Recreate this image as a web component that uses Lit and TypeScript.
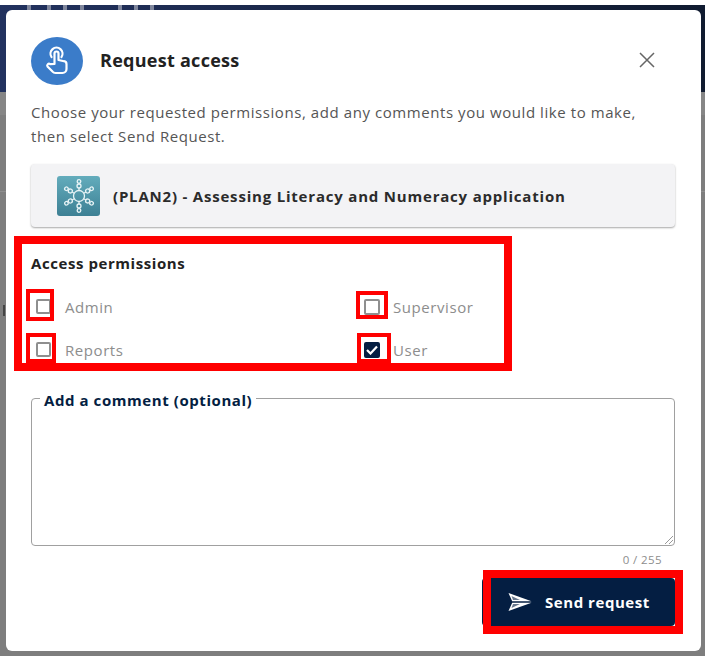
import { LitElement, html, svg, css } from 'lit'
import { customElement } from 'lit/decorators.js'

const PERMISSIONS = [
    { name: 'Admin', checked: false },
    { name: 'Supervisor', checked: false },
    { name: 'Reports', checked: false },
    { name: 'User', checked: true }
]

// red annotation boxes drawn over the screenshot: left, top, width, height, border
const MARKS = [
    [14, 236, 498, 135, 8],
    [26, 289, 28, 32, 4],
    [26, 333, 30, 30, 4],
    [356, 291, 32, 28, 4],
    [357, 333, 34, 30, 4],
    [483, 570, 200, 64, 8]
]

// faint pieces of the page heading that show above the dialog
const TICKS = [27, 47, 63, 80, 118, 134, 150]

@customElement('app-root')
export class AppRoot extends LitElement {
    static styles = css`
        :host {
            display: block;
            width: 705px;
            height: 656px;
            overflow: hidden;
            position: relative;
            background: #fff;
            font-family: 'Open Sans', 'Noto Sans', sans-serif;
            letter-spacing: 0.57px;
        }

        .backdrop {
            position: absolute;
            inset: 5px 0 0 0;
            background: #7e7e7e;
        }

        .banner {
            height: 87px;
            background: linear-gradient(90deg, #22325f, #1a2748 45%, #101b30);
        }

        .band {
            height: 23px;
            background: #868686;
        }

        .rule {
            height: 1px;
            margin-top: 76px;
            background: #8e8e8e;
        }

        .tick {
            position: absolute;
            top: 5px;
            width: 4px;
            height: 5px;
            background: #7f869c;
        }

        .glyph {
            position: absolute;
            left: 3px;
            top: 305px;
            width: 2px;
            height: 11px;
            background: #444;
        }

        .dialog {
            position: absolute;
            left: 6px;
            top: 10px;
            width: 695px;
            height: 641px;
            box-sizing: border-box;
            background: #fff;
            border-radius: 6px;
            padding: 27px 26px 0 25px;
        }

        .head {
            display: flex;
            align-items: center;
            height: 48px;
        }

        .avatar {
            width: 52px;
            height: 48px;
            border-radius: 50%;
            background: #3b7cc9;
            display: flex;
            align-items: center;
            justify-content: center;
        }

        .title {
            margin: 0 0 3px 17px;
            font-size: 18px;
            font-weight: 700;
            letter-spacing: 0.27px;
            color: #222;
            flex: 1;
        }

        .close {
            width: 16px;
            height: 16px;
            margin: 0 20px 3px 0;
        }

        .intro {
            margin: 15px 0 0;
            font-size: 15px;
            line-height: 24px;
            color: #555;
            width: 625px;
        }

        .app {
            margin-top: 16px;
            height: 63px;
            box-sizing: border-box;
            display: flex;
            align-items: center;
            gap: 13px;
            padding-left: 26px;
            background: #f3f3f5;
            border-radius: 4px;
            box-shadow: 0 1px 2px rgba(0, 0, 0, 0.35);
            font-size: 15px;
            font-weight: 700;
            letter-spacing: 0.8px;
            color: #2b2b2b;
        }

        .app-icon {
            width: 43px;
            height: 40px;
            border-radius: 3px;
            background: linear-gradient(180deg, #63acbc, #3d8094);
            display: flex;
            align-items: center;
            justify-content: center;
        }

        .perms {
            margin-top: 24px;
        }

        .perms-title {
            font-size: 15px;
            font-weight: 700;
            color: #222;
            line-height: 24px;
        }

        .grid {
            display: grid;
            grid-template-columns: 328px 1fr;
            grid-auto-rows: 43px;
            margin-top: 10px;
        }

        .perm {
            display: flex;
            align-items: center;
            gap: 14px;
            height: 43px;
            font-size: 15px;
            color: #8d8d8d;
        }

        .box {
            width: 15px;
            height: 15px;
            box-sizing: border-box;
            border: 2px solid #8f8f8f;
            border-radius: 2px;
            margin-left: 5px;
            display: flex;
            align-items: center;
            justify-content: center;
        }

        .perm:nth-child(even) {
            gap: 13px;
        }

        .perm:nth-child(even) .box {
            width: 16px;
            height: 16px;
        }

        .box.on {
            background: #041e42;
            border-color: #041e42;
        }

        .comment {
            margin: 17px 0 0;
            padding: 0;
            height: 158px;
            box-sizing: border-box;
            border: 1px solid #a0a0a0;
            border-radius: 4px;
            position: relative;
            width: 644px;
        }

        .comment legend {
            margin-left: 8px;
            padding: 4px 4px 0;
            font-size: 15px;
            font-weight: 700;
            line-height: 16px;
            color: #041e42;
        }

        .grip {
            position: absolute;
            right: 0;
            bottom: 0;
        }

        .count {
            margin: 6px 13px 0 0;
            text-align: right;
            font-size: 11.5px;
            letter-spacing: 0.4px;
            line-height: 16px;
            color: #8d8d8d;
        }

        .actions {
            display: flex;
            justify-content: flex-end;
            margin-top: 10px;
        }

        .send {
            width: 193px;
            height: 48px;
            box-sizing: border-box;
            display: flex;
            align-items: center;
            gap: 13px;
            padding: 0 0 0 26px;
            border: 0;
            border-radius: 4px;
            background: #041e42;
            color: #fff;
            font: 700 15px 'Open Sans', 'Noto Sans', sans-serif;
            letter-spacing: 0.55px;
        }

        .mark {
            position: absolute;
            box-sizing: border-box;
            border: 0 solid #ff0000;
        }
    `

    renderHub() {
        const spokes = [0, 60, 120, 180, 240, 300]
        return html`<svg width="36" height="36" viewBox="-18 -18 36 36" fill="none" stroke="#e8f4f6" stroke-width="1.3">
            <circle r="5.5"></circle>
            ${spokes.map(
                (a) => svg`<g transform="rotate(${a})">
                    <line y1="-5.5" y2="-8"></line>
                    <circle cy="-10" r="2"></circle>
                    <circle cy="-14.5" r="1.8"></circle>
                </g>`
            )}
        </svg>`
    }

    render() {
        return html`
            <div class="backdrop">
                <div class="banner"></div>
                <div class="band"></div>
                <div class="rule"></div>
            </div>
            ${TICKS.map((x) => html`<span class="tick" style="left:${x}px"></span>`)}
            <span class="glyph"></span>
            <div class="dialog">
                <div class="head">
                    <div class="avatar">
                        <svg width="26" height="30" viewBox="0 0 26 30" fill="none" stroke="#fff" stroke-width="2.2" stroke-linecap="round" stroke-linejoin="round">
                            <path d="M7.5 11a6 6 0 1 1 10 0"></path>
                            <path d="M10.5 18V7.500a2 2 0 0 1 4 0V14l5.5 1.200a3 3 0 0 1 2.500 3V23a4 4 0 0 1-4 4h-7a4 4 0 0 1-3-1.400L3.500 20.500a1.800 1.800 0 0 1 2.600-2.400z"></path>
                        </svg>
                    </div>
                    <div class="title">Request access</div>
                    <svg class="close" viewBox="0 0 16 16" stroke="#666" stroke-width="1.5" fill="none">
                        <path d="M1 1l14 14M15 1L1 15"></path>
                    </svg>
                </div>
                <p class="intro">Choose your requested permissions, add any comments you would like to make, then select Send Request.</p>
                <div class="app">
                    <div class="app-icon">${this.renderHub()}</div>
                    <span>(PLAN2) - Assessing Literacy and Numeracy application</span>
                </div>
                <div class="perms">
                    <div class="perms-title">Access permissions</div>
                    <div class="grid">
                        ${PERMISSIONS.map(
                            (p) => html`<div class="perm">
                                <span class="box ${p.checked ? 'on' : ''}">
                                    ${p.checked
                                        ? html`<svg width="12" height="10" viewBox="0 0 12 10" fill="none" stroke="#fff" stroke-width="2.2"><path d="M1 5l3.500 3.500L11 1.500"></path></svg>`
                                        : ''}
                                </span>
                                ${p.name}
                            </div>`
                        )}
                    </div>
                </div>
                <fieldset class="comment">
                    <legend>Add a comment (optional)</legend>
                    <svg class="grip" width="10" height="10" viewBox="0 0 10 10" stroke="#999" fill="none"><path d="M1 9l8-8M5 9l4-4"></path></svg>
                </fieldset>
                <div class="count">0 / 255</div>
                <div class="actions">
                    <button class="send">
                        <svg width="24" height="18" viewBox="0 0 24 18" fill="#fff">
                            <path d="M0.5 0L23.5 8.3H4.2z"></path>
                            <path d="M0.5 18L23.5 9.7H4.2z"></path>
                            <path d="M3.5 3L12 7H5z" fill="#041e42" opacity="0.6"></path>
                            <path d="M3.5 15L12 11H5z" fill="#041e42" opacity="0.6"></path>
                        </svg>
                        Send request
                    </button>
                </div>
            </div>
            ${MARKS.map(
                ([l, t, w, h, b]) =>
                    html`<div class="mark" style="left:${l}px;top:${t}px;width:${w}px;height:${h}px;border-width:${b}px"></div>`
            )}
        `
    }
}
